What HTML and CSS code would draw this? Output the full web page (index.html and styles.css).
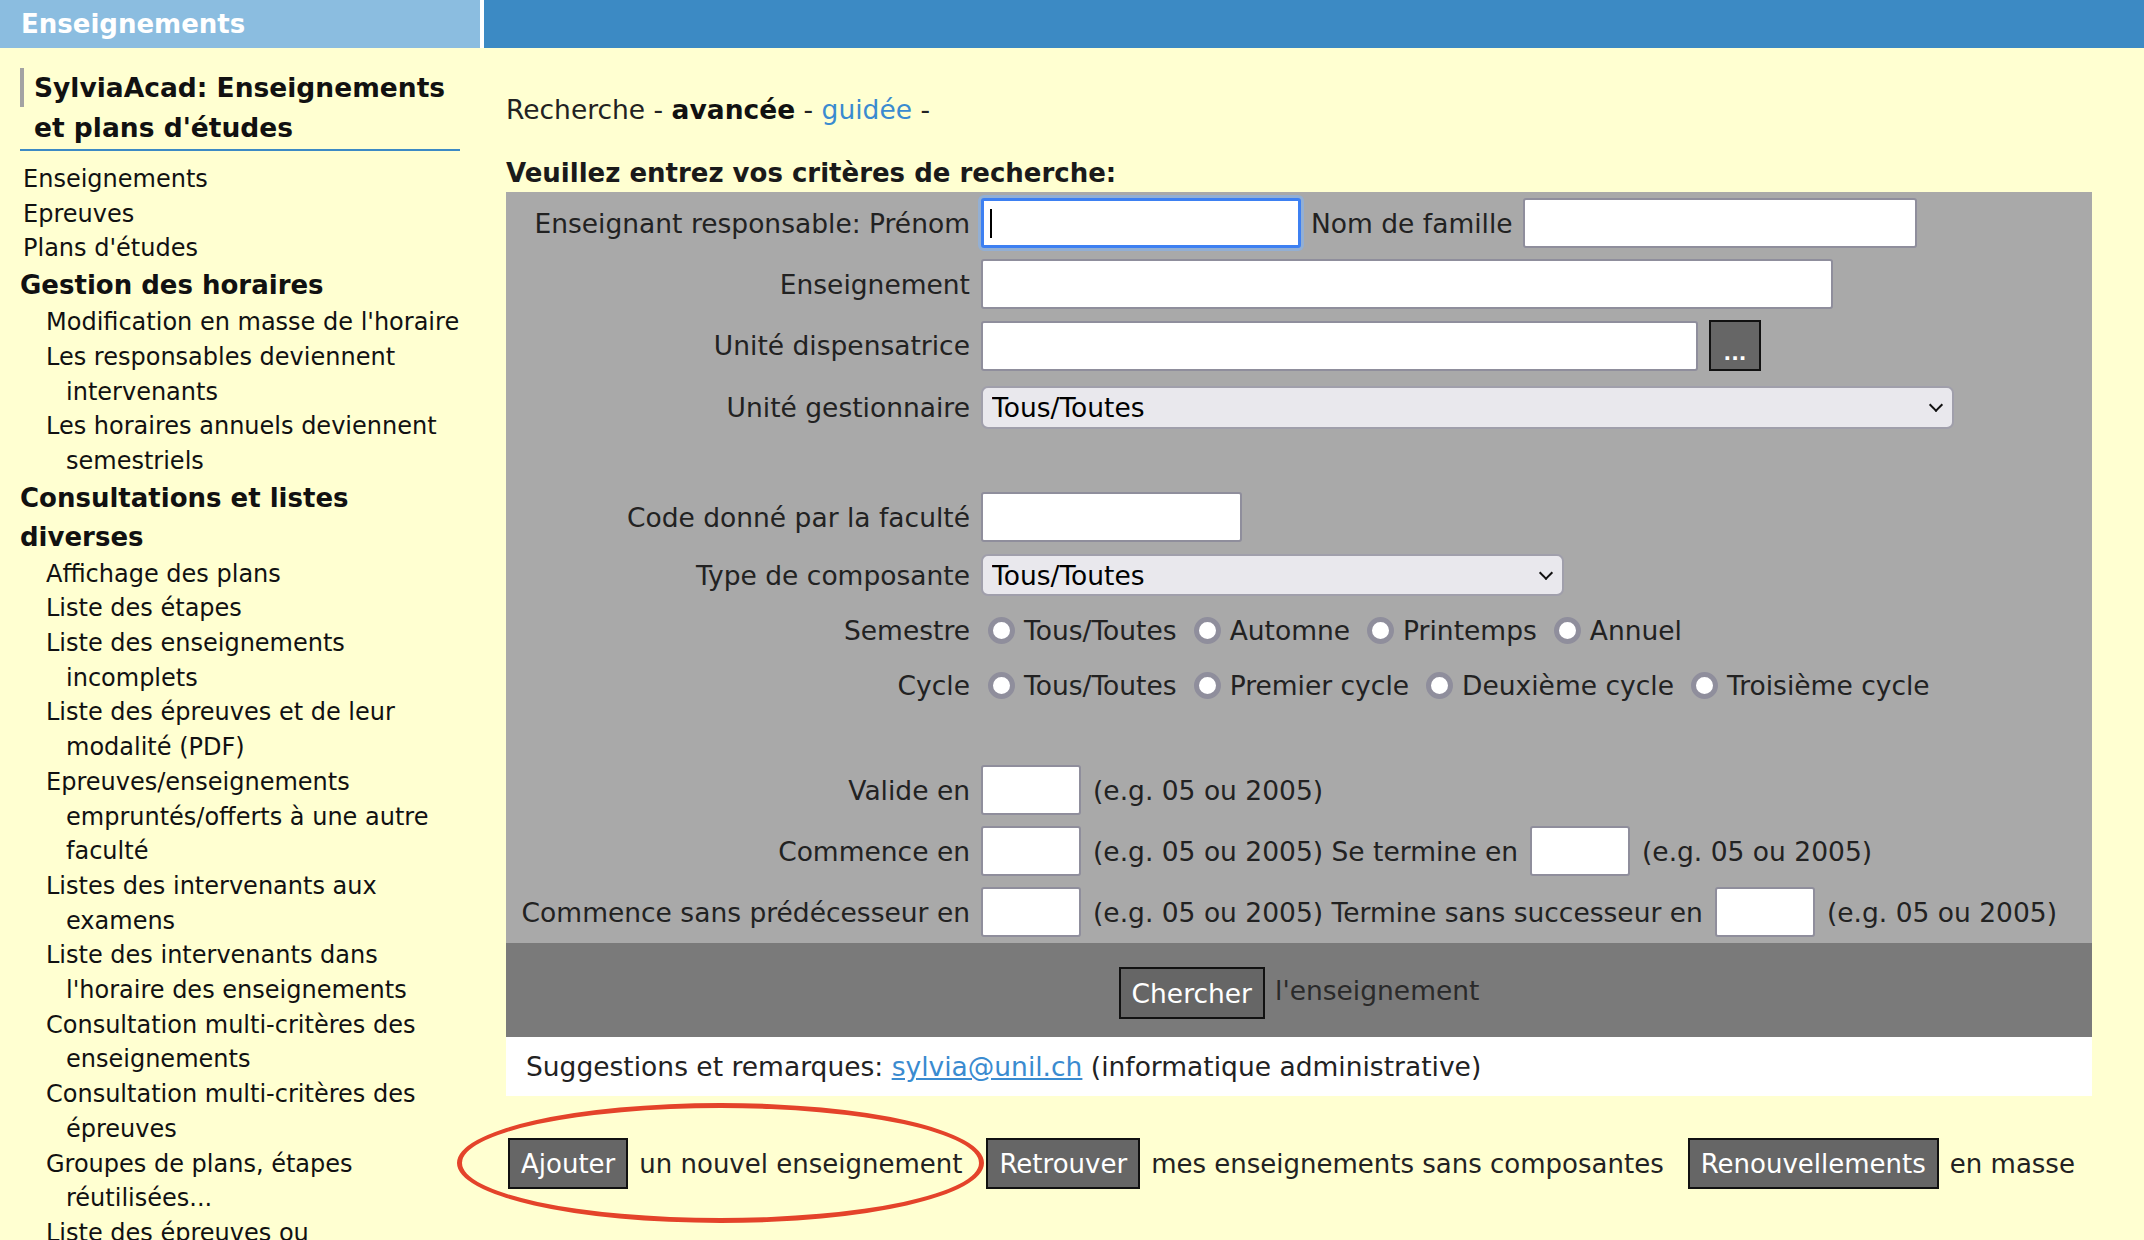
FILE: index.html
```html
<!DOCTYPE html>
<html lang="fr">
<head>
    <meta charset="UTF-8">
    <meta name="viewport" content="width=device-width, initial-scale=1.0">
    <title>SylviaAcad - Enseignements</title>
    <link rel="stylesheet" href="styles.css">
</head>
<body>
    <header class="top">
        <div class="top-title">Enseignements</div>
        <div class="top-bar"></div>
    </header>

    <div class="layout">
        <nav class="sidebar">
            <div class="app-title">SylviaAcad: Enseignements et plans d'études</div>
            <ul class="menu">
                <li class="item">Enseignements</li>
                <li class="item">Epreuves</li>
                <li class="item">Plans d'études</li>
                <li class="group">Gestion des horaires</li>
                <li class="sub">Modification en masse de l'horaire</li>
                <li class="sub">Les responsables deviennent intervenants</li>
                <li class="sub">Les horaires annuels deviennent semestriels</li>
                <li class="group">Consultations et listes diverses</li>
                <li class="sub">Affichage des plans</li>
                <li class="sub">Liste des étapes</li>
                <li class="sub">Liste des enseignements incomplets</li>
                <li class="sub">Liste des épreuves et de leur modalité (PDF)</li>
                <li class="sub">Epreuves/enseignements empruntés/offerts à une autre faculté</li>
                <li class="sub">Listes des intervenants aux examens</li>
                <li class="sub">Liste des intervenants dans l'horaire des enseignements</li>
                <li class="sub">Consultation multi-critères des enseignements</li>
                <li class="sub">Consultation multi-critères des épreuves</li>
                <li class="sub">Groupes de plans, étapes réutilisées...</li>
                <li class="sub">Liste des épreuves ou enseignements partagés</li>
            </ul>
        </nav>

        <main class="content">
            <p class="modes">Recherche - <b>avancée</b> - <a href="#" class="link">guidée</a> -</p>
            <h2 class="prompt">Veuillez entrez vos critères de recherche:</h2>

            <form class="search">
                <div class="criteria">
                    <label class="label">Enseignant responsable: Prénom</label>
                    <div class="field">
                        <span class="focused"><input type="text" class="text prenom"></span>
                        <span>Nom de famille</span>
                        <input type="text" class="text nom">
                    </div>

                    <label class="label">Enseignement</label>
                    <div class="field"><input type="text" class="text wide"></div>

                    <label class="label">Unité dispensatrice</label>
                    <div class="field">
                        <input type="text" class="text unite">
                        <button type="button" class="browse">...</button>
                    </div>

                    <label class="label">Unité gestionnaire</label>
                    <div class="field">
                        <span class="select"><select class="gestion"><option>Tous/Toutes</option></select></span>
                    </div>

                    <div class="spacer"></div>

                    <label class="label">Code donné par la faculté</label>
                    <div class="field"><input type="text" class="text code"></div>

                    <label class="label">Type de composante</label>
                    <div class="field compact">
                        <span class="select"><select class="type"><option>Tous/Toutes</option></select></span>
                    </div>

                    <label class="label">Semestre</label>
                    <div class="field compact options">
                        <label class="option"><input type="radio" name="semestre">Tous/Toutes</label>
                        <label class="option"><input type="radio" name="semestre">Automne</label>
                        <label class="option"><input type="radio" name="semestre">Printemps</label>
                        <label class="option"><input type="radio" name="semestre">Annuel</label>
                    </div>

                    <label class="label">Cycle</label>
                    <div class="field compact options">
                        <label class="option"><input type="radio" name="cycle">Tous/Toutes</label>
                        <label class="option"><input type="radio" name="cycle">Premier cycle</label>
                        <label class="option"><input type="radio" name="cycle">Deuxième cycle</label>
                        <label class="option"><input type="radio" name="cycle">Troisième cycle</label>
                    </div>

                    <div class="spacer short"></div>

                    <label class="label">Valide en</label>
                    <div class="field years">
                        <input type="text" class="text year">
                        <span>(e.g. 05 ou 2005)</span>
                    </div>

                    <label class="label">Commence en</label>
                    <div class="field years">
                        <input type="text" class="text year">
                        <span>(e.g. 05 ou 2005) Se termine en</span>
                        <input type="text" class="text year">
                        <span>(e.g. 05 ou 2005)</span>
                    </div>

                    <label class="label">Commence sans prédécesseur en</label>
                    <div class="field years">
                        <input type="text" class="text year">
                        <span>(e.g. 05 ou 2005) Termine sans successeur en</span>
                        <input type="text" class="text year">
                        <span>(e.g. 05 ou 2005)</span>
                    </div>
                </div>

                <div class="submit-bar">
                    <button type="submit" class="btn">Chercher</button>
                    <span>l'enseignement</span>
                </div>

                <div class="contact">
                    Suggestions et remarques:&nbsp;<a href="#" class="mail">sylvia@unil.ch</a>&nbsp;(informatique administrative)
                </div>
            </form>

            <div class="actions">
                <span class="highlight"></span>
                <button type="button" class="btn">Ajouter</button>
                <span class="after">un nouvel enseignement</span>
                <button type="button" class="btn next">Retrouver</button>
                <span class="after">mes enseignements sans composantes</span>
                <button type="button" class="btn next">Renouvellements</button>
                <span class="after">en masse</span>
            </div>
        </main>
    </div>
</body>
</html>
```

FILE: styles.css
```css
html, body {
    height: 100%;
}
body {
    margin: 0;
    background: #ffffd1;
    font-family: "DejaVu Sans", Verdana, sans-serif;
    color: #111;
    overflow: hidden;
}

.top {
    display: flex;
    height: 48px;
}
.top-title {
    width: 480px;
    box-sizing: border-box;
    padding-left: 21px;
    background: #8bbde0;
    color: #fff;
    font-size: 26px;
    font-weight: bold;
    line-height: 48px;
}
.top-bar {
    flex: 1;
    background: #3c8ac4;
    border-left: 4px solid #fff;
}

.layout {
    display: flex;
}

/* left menu */
.sidebar {
    width: 480px;
    flex: none;
    box-sizing: border-box;
    padding: 20px 12px 0 20px;
    font-size: 24px;
}
.app-title {
    position: relative;
    margin-right: 8px;
    padding: 0 0 1px 14px;
    font-size: 26.5px;
    font-weight: bold;
    line-height: 40px;
    border-bottom: 2px solid #3c8ac4;
}
.app-title::before {
    content: "";
    position: absolute;
    left: 0;
    top: 0;
    width: 4px;
    height: 39px;
    background: #a3a3a3;
}
.menu {
    list-style: none;
    margin: 11px 0 0;
    padding: 0;
    line-height: 34.7px;
}
.menu .item {
    padding-left: 3px;
}
.menu .group {
    font-size: 26px;
    font-weight: bold;
    line-height: 39px;
}
.menu .sub {
    padding-left: 46px;
    text-indent: -20px;
}

/* main column */
.content {
    flex: 1;
    padding: 43px 52px 0 26px;
    font-size: 26.5px;
    color: #222;
}
.modes {
    margin: 0;
    line-height: 38px;
}
.modes b {
    color: #111;
}
.link {
    color: #3a8bd0;
    text-decoration: none;
}
.prompt {
    margin: 25px 0 0;
    font-size: 26px;
    line-height: 38px;
    color: #1a1a1a;
}

.search {
    margin: 0;
    background: #a9a9a9;
}
.criteria {
    display: grid;
    grid-template-columns: 464px 1fr;
    column-gap: 11px;
    row-gap: 11px;
    align-items: center;
    padding: 6px 0;
}
.label {
    text-align: right;
    white-space: nowrap;
}
.field {
    display: flex;
    align-items: center;
    gap: 10px;
    min-height: 50px;
    white-space: nowrap;
}
.field.compact {
    min-height: 44px;
}
.field.years {
    gap: 12px;
}
.spacer {
    grid-column: 1 / -1;
    height: 38px;
}
.spacer.short {
    height: 36px;
}

.text {
    box-sizing: border-box;
    height: 50px;
    padding: 0 8px;
    border: 2px solid #8f8e9c;
    border-radius: 3px;
    background: #fff;
    font: inherit;
}
.prenom { width: 320px; }
.nom { width: 394px; }
.wide { width: 852px; }
.unite { width: 717px; }
.code { width: 261px; }
.year { width: 100px; }

.focused {
    position: relative;
    display: flex;
}
.focused .text {
    border: 3px solid #3d80f2;
    box-shadow: 0 0 0 3px #93afd3;
    outline: none;
}
.focused::after {
    content: "";
    position: absolute;
    left: 9px;
    top: 11px;
    width: 2px;
    height: 29px;
    background: #000;
}

.browse {
    box-sizing: border-box;
    width: 52px;
    height: 51px;
    margin-left: 1px;
    padding: 14px 0 0;
    border: 2px solid #111;
    background: #666;
    color: #fff;
    font: bold 20px "DejaVu Sans", sans-serif;
}

.select {
    position: relative;
    display: flex;
}
.select select {
    appearance: none;
    -webkit-appearance: none;
    box-sizing: border-box;
    padding: 0 40px 0 9px;
    border: 2px solid #a09fab;
    border-radius: 7px;
    background: #e9e8ed;
    color: #000;
    font: inherit;
}
.select::after {
    content: "";
    position: absolute;
    right: 13px;
    top: 50%;
    margin-top: -7px;
    width: 8px;
    height: 8px;
    border-right: 2px solid #111;
    border-bottom: 2px solid #111;
    transform: rotate(45deg);
    pointer-events: none;
}
.gestion { width: 973px; height: 43px; }
.type { width: 583px; height: 42px; }

.options {
    gap: 0;
}
.option {
    display: flex;
    align-items: center;
    gap: 9px;
    margin-right: 17px;
}
.option:first-child {
    margin-left: 7px;
}
.option input {
    appearance: none;
    -webkit-appearance: none;
    box-sizing: border-box;
    width: 27px;
    height: 27px;
    margin: 0;
    border: 5px solid #8f8e9c;
    border-radius: 50%;
    background: #fff;
}

.btn {
    box-sizing: border-box;
    height: 52px;
    padding: 0 11px;
    border: 2px solid #111;
    border-radius: 0;
    background: #666;
    color: #fff;
    font: inherit;
}

.submit-bar {
    display: flex;
    justify-content: center;
    align-items: center;
    gap: 10px;
    height: 94px;
    background: #7a7a7a;
    color: #2a2a2a;
}
.submit-bar .btn {
    margin-top: 6px;
}

.contact {
    display: flex;
    align-items: center;
    height: 59px;
    padding-left: 20px;
    background: #fff;
    white-space: nowrap;
}
.mail {
    color: #3a8bd0;
}

.actions {
    position: relative;
    display: flex;
    align-items: center;
    margin-top: 42px;
    padding-left: 2px;
    font-size: 26px;
    white-space: nowrap;
}
.actions .btn {
    height: 51px;
}
.actions .after {
    margin-left: 11px;
}
.actions .next {
    margin-left: 24px;
}
.highlight {
    position: absolute;
    left: -49px;
    top: -35px;
    width: 527px;
    height: 120px;
    box-sizing: border-box;
    border: 5px solid #e4432a;
    border-radius: 50%;
    pointer-events: none;
}
```
